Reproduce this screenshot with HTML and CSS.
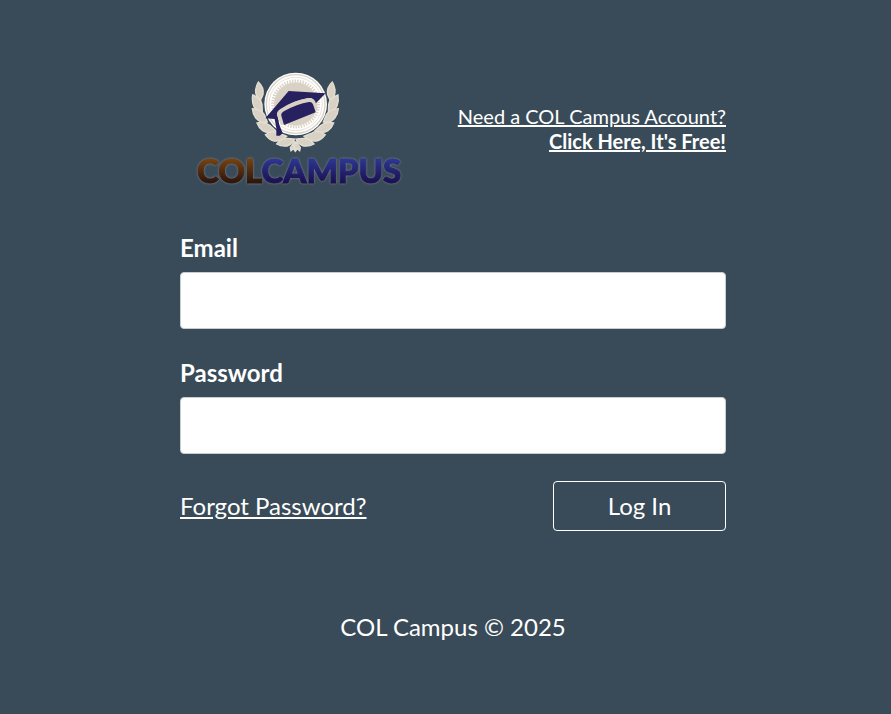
FILE: index.html
```html
<!DOCTYPE html>
<html lang="en">
<head>
    <meta charset="UTF-8">
    <meta name="viewport" content="width=device-width, initial-scale=1.0">
    <title>Log In to COL Campus</title>
    <link rel="stylesheet" href="styles.css">
</head>
<body>
    <main class="login">
        <header class="login-header">
            <svg class="logo" viewBox="0 0 230 120" role="img" aria-label="COL Campus">
                <defs>
                    <linearGradient id="brown" x1="0" y1="0" x2="0" y2="1">
                        <stop offset="0.25" stop-color="#74400f"/>
                        <stop offset="0.8" stop-color="#2c160d"/>
                    </linearGradient>
                    <linearGradient id="blue" x1="0" y1="0" x2="0" y2="1">
                        <stop offset="0.25" stop-color="#2c3590"/>
                        <stop offset="0.8" stop-color="#1b1151"/>
                    </linearGradient>
                    <!-- one side of the laurel, mirrored for the other -->
                    <g id="laurel" fill="#d9d2c4" stroke="#e4dfd4" stroke-width="4">
                        <path d="M55 60Q73 76 69 98L61 116Q45 104 47 83Q49 69 55 60Z"/>
                        <path d="M38 99Q62 107 66 127L67 151Q48 149 41 132Q35 116 38 99Z"/>
                        <path d="M37 140Q63 142 73 158L82 180Q61 184 48 169Q38 156 37 140Z"/>
                        <path d="M51 183Q73 177 89 190L108 207Q84 216 68 206Q56 197 51 183Z"/>
                        <path d="M76 218Q96 203 117 213L140 223Q122 240 102 237Q86 233 76 218Z"/>
                        <path d="M110 246Q124 228 143 229L164 231Q158 247 141 252Q124 254 110 246Z"/>
                        <path d="M164 239L151 257L153 266L160 260L165 267L170 250Z"/>
                    </g>
                </defs>
                <svg x="60" y="-8" width="110" height="96" viewBox="0 0 330 288">
                    <use href="#laurel"/>
                    <use href="#laurel" transform="translate(332 0) scale(-1 1)"/>
                    <circle cx="167" cy="126" r="94" fill="#fff"/>
                    <circle cx="167" cy="126" r="88" fill="none" stroke="#d9d2c4" stroke-width="4"/>
                    <circle cx="167" cy="126" r="80" fill="none" stroke="#d9d2c4" stroke-width="2"/>
                    <circle cx="167" cy="126" r="65" fill="#d9d2c4"/>
                    <circle cx="167" cy="126" r="69" fill="none" stroke="#d9d2c4" stroke-width="9" stroke-dasharray="4 4"/>
                    <path d="M76 169L146 87L257 94L226 125Q224 108 204 108Q157 116 120 142Q105 151 114 168L118 188L128 214L119 221L109 221V198L104 171Z" fill="#28215f"/>
                    <path d="M127 188L118 161Q116 151 128 144Q165 119 205 113Q220 111 224 127L229 145" fill="none" stroke="#d9d2c4" stroke-width="9"/>
                    <path d="M124 161Q122 153 133 147Q171 126 207 120Q217 119 220 130L227 151L132 189Z" fill="#28215f"/>
                </svg>
                <text class="wordmark" x="17" y="113"><tspan fill="url(#brown)" stroke="url(#brown)">COL</tspan><tspan fill="url(#blue)" stroke="url(#blue)">CAMPUS</tspan></text>
            </svg>
            <a class="register" href="#">Need a COL Campus Account?<br><b>Click Here, It's Free!</b></a>
        </header>
        <form action="#" method="post">
            <label for="email">Email</label>
            <input type="email" id="email" name="email">

            <label for="password">Password</label>
            <input type="password" id="password" name="password">

            <div class="actions">
                <a href="#">Forgot Password?</a>
                <button type="submit">Log In</button>
            </div>
        </form>
        <footer>COL Campus © 2025</footer>
    </main>
</body>
</html>
```

FILE: styles.css
```css
* {
    box-sizing: border-box;
}
body {
    margin: 0;
    padding: 70px 15px 0 30px;
    background-color: #394b58;
    color: #fff;
    font-family: Lato, "Helvetica Neue", sans-serif;
    font-size: 24px;
    line-height: 36px;
}
a {
    color: #fff;
    text-decoration: underline;
}
.login {
    max-width: 546px;
    margin: 0 auto;
}
.login-header {
    display: flex;
    justify-content: space-between;
    align-items: center;
    margin-bottom: 40px;
}
.logo {
    width: 230px;
    height: 120px;
}
.wordmark {
    font-size: 33px;
    font-weight: 900;
    stroke-width: 1px;
    filter: drop-shadow(0 0 1px #8a8594);
}
.register {
    padding-bottom: 2px;
    font-size: 20px;
    line-height: 25px;
    text-align: right;
}
label {
    display: block;
    margin-bottom: 6px;
    font-weight: bold;
}
input {
    display: block;
    width: 100%;
    height: 57px;
    margin-bottom: 26px;
    padding: 8px 16px;
    background-color: #fff;
    border: 1px solid #c7cdd1;
    border-radius: 4px;
    color: #2d3b45;
    font: inherit;
}
.actions {
    display: flex;
    justify-content: space-between;
    align-items: center;
    margin-top: 27px;
}
button {
    width: 173px;
    height: 50px;
    background: transparent;
    border: 1px solid #fff;
    border-radius: 4px;
    color: #fff;
    font: inherit;
    cursor: pointer;
}
footer {
    margin-top: 78px;
    text-align: center;
}
```
